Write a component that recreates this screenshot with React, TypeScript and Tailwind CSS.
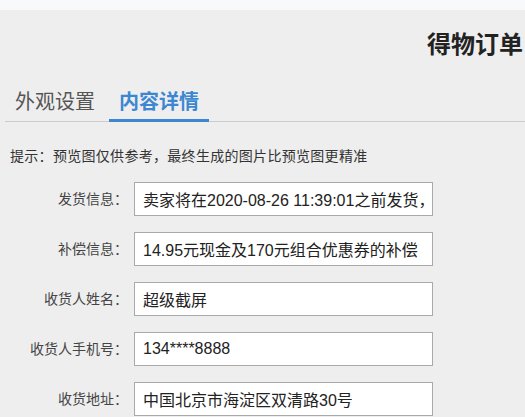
import React from "react";

const rows: { label: string; value: string }[] = [
  { label: "发货信息：", value: "卖家将在2020-08-26 11:39:01之前发货，" },
  { label: "补偿信息：", value: "14.95元现金及170元组合优惠券的补偿" },
  { label: "收货人姓名：", value: "超级截屏" },
  { label: "收货人手机号：", value: "134****8888" },
  { label: "收货地址：", value: "中国北京市海淀区双清路30号" },
];

export default function App() {
  return (
    <div
      className="w-[525px] h-[417px] overflow-hidden bg-[#eeeeee]"
      style={{ fontFamily: '"Liberation Sans", "Noto Sans CJK SC", sans-serif' }}
    >
      <div className="h-[10px] bg-[#f8f9fb]" />
      <div className="pt-[19px] pl-[427px] whitespace-nowrap text-[24px] leading-[32px] font-bold text-[#222]">
        得物订单
      </div>
      <div className="mt-[27px] ml-[5px] flex gap-[4px] border-b border-[#cccccc]">
        <div className="-mb-px px-[10px] pb-[3px] border-b-[3px] border-transparent text-[20px] leading-[28px] text-[#555]">
          外观设置
        </div>
        <div className="-mb-px px-[10px] pb-[3px] border-b-[3px] border-[#3c87d2] text-[20px] leading-[28px] font-bold text-[#3c87d2]">
          内容详情
        </div>
      </div>
      <div className="mt-[24px] pl-[10px] text-[14px] leading-[20px] tracking-[0.3px] text-[#333]">
        提示：预览图仅供参考，最终生成的图片比预览图更精准
      </div>
      <div className="mt-[16px] flex flex-col gap-[16px]">
        {rows.map((r) => (
          <div key={r.label} className="flex items-center">
            <div className="w-[128px] text-right text-[14px] leading-[20px] text-[#444] whitespace-nowrap">
              {r.label}
            </div>
            <input
              readOnly
              value={r.value}
              className="ml-[6px] w-[299px] h-[34px] border border-[#a9a9a9] bg-white pl-[8px] text-[16px] text-[#222] outline-none"
            />
          </div>
        ))}
      </div>
    </div>
  );
}
